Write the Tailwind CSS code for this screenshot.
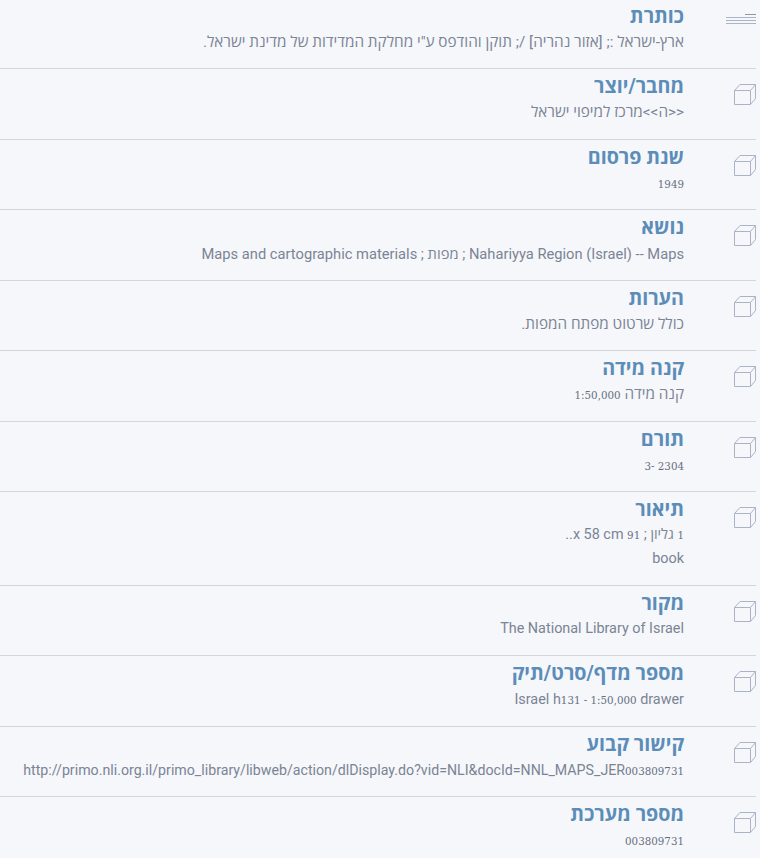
<!DOCTYPE html>
<html lang="he" dir="rtl">

<head>
  <meta charset="UTF-8" />
  <title>פרטי רשומה</title>
  <script src="https://cdn.jsdelivr.net/npm/@tailwindcss/browser@4"></script>
</head>

<body class="bg-[#f5f7fb] font-['Roboto','Open_Sans','Noto_Sans',sans-serif] overflow-hidden">
  <div class="w-[760px] pr-[4px]">

    <!-- title row -->
    <div class="h-[69px] border-b border-[#d3d6de] flex">
      <svg class="w-[30px] h-[24px] mt-[12px] shrink-0" viewBox="0 0 30 24" fill="none" stroke="#aab4c6">
        <path d="M19 2.500h11" stroke="#8d97aa" />
        <path d="M0 5.500h30M0 8.500h30M0 11.500h30" />
      </svg>
      <div class="mr-[42px] pt-[3px]">
        <h2 class="text-[19.700px] leading-[28px] font-bold text-[#5b8db8]">כותרת</h2>
        <p class="text-[15.300px] leading-[22px] text-[#7b8494]">ארץ-ישראל :; [אזור נהריה] /; תוקן והודפס ע"י מחלקת המדידות של מדינת ישראל.</p>
      </div>
    </div>

    <div class="h-[70.5px] border-b border-[#d3d6de] flex">
      <svg class="w-[22px] h-[21px] mt-[15px] shrink-0" viewBox="0 0 22 21" fill="none" stroke="#aab4c6">
        <path d="M0.500 6.500h16v14h-16zM0.500 6.500L6 0.500h15.500v14L16.500 20.500M16.500 6.500L21.500 0.500" />
      </svg>
      <div class="mr-[50px] pt-[4px]">
        <h2 class="text-[19.700px] leading-[28px] font-bold text-[#5b8db8]">מחבר/יוצר</h2>
        <p class="text-[15.300px] leading-[22px] text-[#7b8494]">&lt;&lt;ה&gt;&gt;מרכז למיפוי ישראל</p>
      </div>
    </div>

    <div class="h-[70.5px] border-b border-[#d3d6de] flex">
      <svg class="w-[22px] h-[21px] mt-[15px] shrink-0" viewBox="0 0 22 21" fill="none" stroke="#aab4c6">
        <path d="M0.500 6.500h16v14h-16zM0.500 6.500L6 0.500h15.500v14L16.500 20.500M16.500 6.500L21.500 0.500" />
      </svg>
      <div class="mr-[50px] pt-[4px]">
        <h2 class="text-[19.700px] leading-[28px] font-bold text-[#5b8db8]">שנת פרסום</h2>
        <p class="text-[15.300px] leading-[22px] text-[#7b8494]"><span class="font-['DejaVu_Serif'] text-[10.300px] text-[#666f80]">1949</span></p>
      </div>
    </div>

    <div class="h-[70.5px] border-b border-[#d3d6de] flex">
      <svg class="w-[22px] h-[21px] mt-[15px] shrink-0" viewBox="0 0 22 21" fill="none" stroke="#aab4c6">
        <path d="M0.500 6.500h16v14h-16zM0.500 6.500L6 0.500h15.500v14L16.500 20.500M16.500 6.500L21.500 0.500" />
      </svg>
      <div class="mr-[50px] pt-[4px]">
        <h2 class="text-[19.700px] leading-[28px] font-bold text-[#5b8db8]">נושא</h2>
        <p class="text-[14.700px] leading-[22px] mt-[1px] text-[#7b8494]">Nahariyya Region (Israel) -- Maps ; מפות ; Maps and cartographic materials</p>
      </div>
    </div>

    <div class="h-[70.5px] border-b border-[#d3d6de] flex">
      <svg class="w-[22px] h-[21px] mt-[15px] shrink-0" viewBox="0 0 22 21" fill="none" stroke="#aab4c6">
        <path d="M0.500 6.500h16v14h-16zM0.500 6.500L6 0.500h15.500v14L16.500 20.500M16.500 6.500L21.500 0.500" />
      </svg>
      <div class="mr-[50px] pt-[4px]">
        <h2 class="text-[19.700px] leading-[28px] font-bold text-[#5b8db8]">הערות</h2>
        <p class="text-[15.300px] leading-[22px] text-[#7b8494]">כולל שרטוט מפתח המפות.</p>
      </div>
    </div>

    <div class="h-[70.5px] border-b border-[#d3d6de] flex">
      <svg class="w-[22px] h-[21px] mt-[15px] shrink-0" viewBox="0 0 22 21" fill="none" stroke="#aab4c6">
        <path d="M0.500 6.500h16v14h-16zM0.500 6.500L6 0.500h15.500v14L16.500 20.500M16.500 6.500L21.500 0.500" />
      </svg>
      <div class="mr-[50px] pt-[4px]">
        <h2 class="text-[19.700px] leading-[28px] font-bold text-[#5b8db8]">קנה מידה</h2>
        <p class="text-[15.300px] leading-[22px] text-[#7b8494]">קנה מידה <span class="font-['DejaVu_Serif'] text-[10.300px] text-[#666f80]">1:50,000</span></p>
      </div>
    </div>

    <div class="h-[70.5px] border-b border-[#d3d6de] flex">
      <svg class="w-[22px] h-[21px] mt-[15px] shrink-0" viewBox="0 0 22 21" fill="none" stroke="#aab4c6">
        <path d="M0.500 6.500h16v14h-16zM0.500 6.500L6 0.500h15.500v14L16.500 20.500M16.500 6.500L21.500 0.500" />
      </svg>
      <div class="mr-[50px] pt-[4px]">
        <h2 class="text-[19.700px] leading-[28px] font-bold text-[#5b8db8]">תורם</h2>
        <p class="text-[15.300px] leading-[22px] text-[#7b8494]"><span class="font-['DejaVu_Serif'] text-[10.300px] text-[#666f80]">2304 -3</span></p>
      </div>
    </div>

    <div class="h-[94px] border-b border-[#d3d6de] flex">
      <svg class="w-[22px] h-[21px] mt-[15px] shrink-0" viewBox="0 0 22 21" fill="none" stroke="#aab4c6">
        <path d="M0.500 6.500h16v14h-16zM0.500 6.500L6 0.500h15.500v14L16.500 20.500M16.500 6.500L21.500 0.500" />
      </svg>
      <div class="mr-[50px] pt-[4px]">
        <h2 class="text-[19.700px] leading-[28px] font-bold text-[#5b8db8]">תיאור</h2>
        <p class="text-[14.400px] leading-[22px] text-[#7b8494]"><span class="font-['DejaVu_Serif'] text-[10.300px] text-[#666f80]">1</span> גליון ; <span class="font-['DejaVu_Serif'] text-[10.300px] text-[#666f80]">91</span> x 58 cm..</p>
        <p class="text-[14.400px] leading-[22px] mt-[2px] text-[#7b8494]">book</p>
      </div>
    </div>

    <div class="h-[70px] border-b border-[#d3d6de] flex">
      <svg class="w-[22px] h-[21px] mt-[15px] shrink-0" viewBox="0 0 22 21" fill="none" stroke="#aab4c6">
        <path d="M0.500 6.500h16v14h-16zM0.500 6.500L6 0.500h15.500v14L16.500 20.500M16.500 6.500L21.500 0.500" />
      </svg>
      <div class="mr-[50px] pt-[4px]">
        <h2 class="text-[19.700px] leading-[28px] font-bold text-[#5b8db8]">מקור</h2>
        <p class="text-[14.400px] leading-[22px] text-[#7b8494]">The National Library of Israel</p>
      </div>
    </div>

    <div class="h-[71px] border-b border-[#d3d6de] flex">
      <svg class="w-[22px] h-[21px] mt-[15px] shrink-0" viewBox="0 0 22 21" fill="none" stroke="#aab4c6">
        <path d="M0.500 6.500h16v14h-16zM0.500 6.500L6 0.500h15.500v14L16.500 20.500M16.500 6.500L21.500 0.500" />
      </svg>
      <div class="mr-[50px] pt-[4px]">
        <h2 class="text-[19.700px] leading-[28px] font-bold text-[#5b8db8]">מספר מדף/סרט/תיק</h2>
        <p dir="ltr" class="text-right text-[14.400px] leading-[22px] mt-[1px] text-[#7b8494]">Israel h<span class="font-['DejaVu_Serif'] text-[10.300px] text-[#666f80]">131 - 1:50,000</span> drawer</p>
      </div>
    </div>

    <div class="h-[70px] border-b border-[#d3d6de] flex">
      <svg class="w-[22px] h-[21px] mt-[15px] shrink-0" viewBox="0 0 22 21" fill="none" stroke="#aab4c6">
        <path d="M0.500 6.500h16v14h-16zM0.500 6.500L6 0.500h15.500v14L16.500 20.500M16.500 6.500L21.500 0.500" />
      </svg>
      <div class="mr-[50px] pt-[4px]">
        <h2 class="text-[19.700px] leading-[28px] font-bold text-[#5b8db8]">קישור קבוע</h2>
        <p dir="ltr" class="text-right whitespace-nowrap text-[14.200px] leading-[22px] text-[#7b8494]">http://primo.nli.org.il/primo_library/libweb/action/dlDisplay.do?vid=NLI&amp;docId=NNL_MAPS_JER<span class="font-['DejaVu_Serif'] text-[10.300px] text-[#666f80]">003809731</span></p>
      </div>
    </div>

    <div class="h-[61px] flex">
      <svg class="w-[22px] h-[21px] mt-[15px] shrink-0" viewBox="0 0 22 21" fill="none" stroke="#aab4c6">
        <path d="M0.500 6.500h16v14h-16zM0.500 6.500L6 0.500h15.500v14L16.500 20.500M16.500 6.500L21.500 0.500" />
      </svg>
      <div class="mr-[50px] pt-[4px]">
        <h2 class="text-[19.700px] leading-[28px] font-bold text-[#5b8db8]">מספר מערכת</h2>
        <p class="text-[15.300px] leading-[22px] text-[#7b8494]"><span class="font-['DejaVu_Serif'] text-[10.300px] text-[#666f80]">003809731</span></p>
      </div>
    </div>

  </div>
</body>

</html>
